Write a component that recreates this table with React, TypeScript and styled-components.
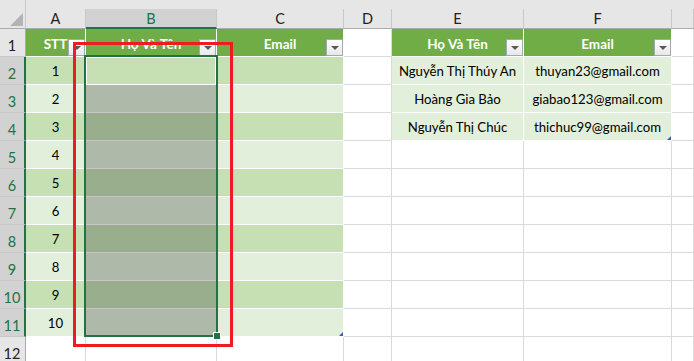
import * as React from 'react'
import styled, { createGlobalStyle } from 'styled-components'

const GlobalStyle = createGlobalStyle`
  html, body {
    margin: 0;
    padding: 0;
    background: #ffffff;
    overflow: hidden;
  }
  body {
    font-family: Lato, 'Liberation Sans', sans-serif;
  }
`

const GREEN = '#217346'
const GRID = '#dadada'

const COLS = [
  { key: 'A', width: 60 },
  { key: 'B', width: 131 },
  { key: 'C', width: 127 },
  { key: 'D', width: 48 },
  { key: 'E', width: 132 },
  { key: 'F', width: 148 },
  { key: 'G', width: 0 },
]

const Sheet = styled.div`
  position: relative;
  display: grid;
  grid-template-columns: 26px ${COLS.filter((c) => c.width).map((c) => c.width + 'px').join(' ')} 1fr;
  grid-template-rows: 9px 20px repeat(12, 28px);
  width: 694px;
  height: 361px;
  overflow: hidden;
  font-size: 13.2px;
  color: #000;
`

const Band = styled.div`
  grid-column: 2 / -1;
  grid-row: 1;
  background: #e6e6e6;
`

const Corner = styled.div`
  grid-column: 1;
  grid-row: 1 / span 2;
  box-sizing: border-box;
  background: #e6e6e6;
  border-right: 1px solid #c8c8c8;
  border-bottom: 1px solid #ababab;
  display: flex;
  align-items: flex-end;
  justify-content: flex-end;
  padding: 0 2px 2px 0;
`

const ColHeader = styled.div<{ $sel?: boolean }>`
  box-sizing: border-box;
  background: ${(p) => (p.$sel ? '#d2d2d2' : '#e6e6e6')};
  color: ${(p) => (p.$sel ? GREEN : '#222')};
  border-right: 1px solid #c8c8c8;
  border-bottom: ${(p) => (p.$sel ? `2px solid ${GREEN}` : '1px solid #ababab')};
  display: flex;
  align-items: center;
  justify-content: center;
  padding-bottom: ${(p) => (p.$sel ? 0 : 1)}px;
  font-size: 14.5px;
`

const RowHeader = styled.div<{ $sel?: boolean }>`
  box-sizing: border-box;
  background: ${(p) => (p.$sel ? '#d2d2d2' : '#e6e6e6')};
  color: ${(p) => (p.$sel ? GREEN : '#222')};
  border-right: ${(p) => (p.$sel ? `2px solid ${GREEN}` : '1px solid #ababab')};
  border-bottom: 1px solid #c8c8c8;
  display: flex;
  align-items: flex-end;
  justify-content: center;
  padding: 0 ${(p) => (p.$sel ? 0 : 1)}px 2px 0;
  font-size: 14.5px;
`

const Cell = styled.div<{ $bg: string; $line: string; $head?: boolean }>`
  position: relative;
  box-sizing: border-box;
  background: ${(p) => p.$bg};
  border-right: 1px solid ${(p) => p.$line};
  border-bottom: 1px solid ${(p) => p.$line};
  display: flex;
  align-items: center;
  justify-content: center;
  white-space: nowrap;
  color: ${(p) => (p.$head ? '#ffffff' : '#000000')};
  font-weight: ${(p) => (p.$head ? 700 : 400)};
  font-size: ${(p) => (p.$head ? 13.5 : 13.2)}px;
  padding-top: ${(p) => (p.$head ? 3 : 0)}px;
`

const FilterButton = styled.span`
  position: absolute;
  right: 0;
  bottom: 0;
  width: 17px;
  height: 17px;
  box-sizing: border-box;
  border: 1px solid #a3a9b4;
  background: linear-gradient(#ffffff, #e8e8e8);
  display: flex;
  align-items: center;
  justify-content: center;
  &::after {
    content: '';
    margin-top: 1px;
    border-left: 4px solid transparent;
    border-right: 4px solid transparent;
    border-top: 4px solid #5a5a5a;
  }
`

const ResizeMark = styled.span`
  position: absolute;
  right: 0;
  bottom: 0;
  width: 0;
  height: 0;
  border-left: 4px solid transparent;
  border-bottom: 4px solid #3c5fb4;
`

const Selection = styled.div`
  position: absolute;
  left: 84px;
  top: 55px;
  width: 134px;
  height: 282px;
  box-sizing: border-box;
  border: 2px solid ${GREEN};
  pointer-events: none;
`

const ActiveCell = styled.div`
  position: absolute;
  left: 0;
  top: 0;
  right: 0;
  height: 28px;
  box-sizing: border-box;
  border: 1px solid #ffffff;
  border-bottom: none;
`

const FillHandle = styled.span`
  position: absolute;
  right: -5px;
  bottom: -5px;
  width: 6px;
  height: 6px;
  background: ${GREEN};
  border: 1px solid #ffffff;
`

const Highlight = styled.div`
  position: absolute;
  left: 73px;
  top: 42px;
  width: 160px;
  height: 305px;
  box-sizing: border-box;
  border: 3px solid #ed1c24;
  pointer-events: none;
`

const table2 = [
  ['Nguyễn Thị Thúy An', 'thuyan23@gmail.com'],
  ['Hoàng Gia Bảo', 'giabao123@gmail.com'],
  ['Nguyễn Thị Chúc', 'thichuc99@gmail.com'],
]

const darken = (hex: string) => {
  const n = parseInt(hex.slice(1), 16)
  const f = (v: number) => Math.round(v * 0.775)
  const r = f((n >> 16) & 255)
  const g = f((n >> 8) & 255)
  const b = f(n & 255)
  return `rgb(${r}, ${g}, ${b})`
}

type CellInfo = {
  bg: string
  line: string
  head?: boolean
  text?: string
  filter?: boolean
  mark?: boolean
}

const cellAt = (row: number, col: string): CellInfo => {
  if (['A', 'B', 'C'].includes(col) && row <= 11) {
    if (row === 1) {
      const titles: Record<string, string> = { A: 'STT', B: 'Họ Và Tên', C: 'Email' }
      return { bg: '#70ad47', line: '#ffffff', head: true, text: titles[col], filter: true }
    }
    let bg = row % 2 === 0 ? '#c6e0b4' : '#e2efda'
    let line = '#ffffff'
    if (col === 'B' && row >= 3) {
      bg = darken(bg)
      line = '#c6c6c6'
    }
    return {
      bg,
      line,
      text: col === 'A' ? String(row - 1) : undefined,
      mark: col === 'C' && row === 11,
    }
  }
  if (['E', 'F'].includes(col) && row <= 4) {
    if (row === 1) {
      return { bg: '#70ad47', line: '#ffffff', head: true, text: col === 'E' ? 'Họ Và Tên' : 'Email', filter: true }
    }
    return {
      bg: '#e2efda',
      line: '#ffffff',
      text: table2[row - 2][col === 'E' ? 0 : 1],
      mark: col === 'F' && row === 4,
    }
  }
  return { bg: '#ffffff', line: GRID }
}

const SelectAllMark = () => (
  <svg width="13" height="13" viewBox="0 0 13 13">
    <polygon points="13,0 13,13 0,13" fill="#b4b4b4" />
  </svg>
)

const App = () => {
  const rows = Array.from({ length: 12 }, (_, i) => i + 1)
  return (
    <>
      <GlobalStyle />
      <Sheet>
        <Corner>
          <SelectAllMark />
        </Corner>
        <Band />
        {COLS.map((c) => (
          <ColHeader key={c.key} $sel={c.key === 'B'}>
            {c.key === 'G' ? '' : c.key}
          </ColHeader>
        ))}
        {rows.map((r) => (
          <React.Fragment key={r}>
            <RowHeader $sel={r >= 2 && r <= 11}>{r}</RowHeader>
            {COLS.map((c) => {
              const info = cellAt(r, c.key)
              return (
                <Cell key={c.key} $bg={info.bg} $line={info.line} $head={info.head}>
                  {info.text}
                  {info.filter && <FilterButton />}
                  {info.mark && <ResizeMark />}
                </Cell>
              )
            })}
          </React.Fragment>
        ))}
        <Selection>
          <ActiveCell />
          <FillHandle />
        </Selection>
        <Highlight />
      </Sheet>
    </>
  )
}

export default App
